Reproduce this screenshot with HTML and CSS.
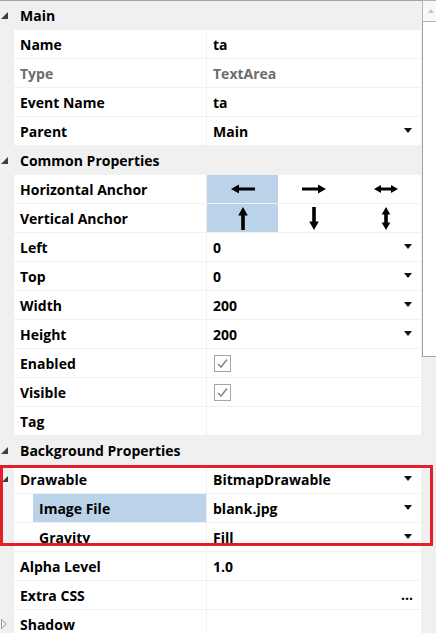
FILE: index.html
```html
<!DOCTYPE html>
<html>
<head>
<meta charset="utf-8">
<link rel="stylesheet" href="styles.css">
</head>
<body>
<div class="panel">
  <div class="grid">
    <div class="cat"><svg class="tri" viewBox="0 0 7 7"><path d="M7 0V7H0Z"/></svg><span class="cat-label">Main</span></div>
    <div class="row"><div class="gutter"></div><div class="name">Name</div><div class="val">ta</div></div>
    <div class="row dim"><div class="gutter"></div><div class="name">Type</div><div class="val">TextArea</div></div>
    <div class="row"><div class="gutter"></div><div class="name">Event Name</div><div class="val">ta</div></div>
    <div class="row"><div class="gutter"></div><div class="name">Parent</div><div class="val">Main<svg class="caret" viewBox="0 0 8 5"><path d="M0 0H8L4 5Z"/></svg></div></div>

    <div class="cat"><svg class="tri" viewBox="0 0 7 7"><path d="M7 0V7H0Z"/></svg><span class="cat-label">Common Properties</span></div>
    <div class="row"><div class="gutter"></div><div class="name">Horizontal Anchor</div>
      <div class="val anchors">
        <div class="seg sel"><svg class="harrow" viewBox="0 0 24 10"><path d="M0 5L8 0.5V3.4H24V6.6H8V9.5Z"/></svg></div>
        <div class="seg"><svg class="harrow" viewBox="0 0 24 10"><path d="M24 5L16 0.5V3.4H0V6.6H16V9.5Z"/></svg></div>
        <div class="seg"><svg class="harrow" viewBox="0 0 24 10"><path d="M0 5L7 1V3.5H17V1L24 5L17 9V6.5H7V9Z"/></svg></div>
      </div>
    </div>
    <div class="row"><div class="gutter"></div><div class="name">Vertical Anchor</div>
      <div class="val anchors">
        <div class="seg sel"><svg class="varrow" viewBox="0 0 10 23"><path d="M5 0L9.8 8.5H6.8V23H3.2V8.5H0.2Z"/></svg></div>
        <div class="seg"><svg class="varrow" viewBox="0 0 10 23"><path d="M5 23L9.8 14.5H6.8V0H3.2V14.5H0.2Z"/></svg></div>
        <div class="seg"><svg class="varrow" viewBox="0 0 10 23"><path d="M5 0L9.3 7.5H6.8V15.5H9.3L5 23L0.7 15.5H3.2V7.5H0.7Z"/></svg></div>
      </div>
    </div>
    <div class="row"><div class="gutter"></div><div class="name">Left</div><div class="val">0<svg class="caret" viewBox="0 0 8 5"><path d="M0 0H8L4 5Z"/></svg></div></div>
    <div class="row"><div class="gutter"></div><div class="name">Top</div><div class="val">0<svg class="caret" viewBox="0 0 8 5"><path d="M0 0H8L4 5Z"/></svg></div></div>
    <div class="row"><div class="gutter"></div><div class="name">Width</div><div class="val">200<svg class="caret" viewBox="0 0 8 5"><path d="M0 0H8L4 5Z"/></svg></div></div>
    <div class="row"><div class="gutter"></div><div class="name">Height</div><div class="val">200<svg class="caret" viewBox="0 0 8 5"><path d="M0 0H8L4 5Z"/></svg></div></div>
    <div class="row"><div class="gutter"></div><div class="name">Enabled</div><div class="val"><span class="chk"><svg viewBox="0 0 15 15"><path d="M3 8L6 11L12 3.5"/></svg></span></div></div>
    <div class="row"><div class="gutter"></div><div class="name">Visible</div><div class="val"><span class="chk"><svg viewBox="0 0 15 15"><path d="M3 8L6 11L12 3.5"/></svg></span></div></div>
    <div class="row"><div class="gutter"></div><div class="name">Tag</div><div class="val"></div></div>

    <div class="cat"><svg class="tri" viewBox="0 0 7 7"><path d="M7 0V7H0Z"/></svg><span class="cat-label">Background Properties</span></div>
    <div class="row"><div class="gutter"><svg class="tri-small" viewBox="0 0 6 6"><path d="M6 0V6H0Z"/></svg></div><div class="name">Drawable</div><div class="val">BitmapDrawable<svg class="caret" viewBox="0 0 8 5"><path d="M0 0H8L4 5Z"/></svg></div></div>
    <div class="row"><div class="gutter"></div><div class="name sub"><div class="sub-name sel">Image File</div></div><div class="val">blank.jpg<svg class="caret" viewBox="0 0 8 5"><path d="M0 0H8L4 5Z"/></svg></div></div>
    <div class="row"><div class="gutter"></div><div class="name sub"><div class="sub-name">Gravity</div></div><div class="val">Fill<svg class="caret" viewBox="0 0 8 5"><path d="M0 0H8L4 5Z"/></svg></div></div>
    <div class="row"><div class="gutter"></div><div class="name">Alpha Level</div><div class="val">1.0</div></div>
    <div class="row"><div class="gutter"></div><div class="name">Extra CSS</div><div class="val"><span></span><span class="dots">...</span></div></div>
    <div class="row"><div class="gutter"><svg class="tri-open" viewBox="0 0 6 10"><path d="M0.5 0.5L5.5 5L0.5 9.5Z"/></svg></div><div class="name">Shadow</div><div class="val"></div></div>
  </div>

  <div class="scroll">
    <div class="sb-btn"><svg class="sb-up" viewBox="0 0 6 4"><path d="M0 4L3 0L6 4Z"/></svg></div>
    <div class="sb-thumb"></div>
  </div>

  <div class="callout"></div>
</div>
</body>
</html>
```

FILE: styles.css
```css
html, body {
  margin: 0;
  padding: 0;
}

body {
  background: #f0f0f0;
  font-family: "Open Sans", "Noto Sans", sans-serif;
  font-weight: 700;
  font-size: 14px;
  color: #000;
  overflow: hidden;
  width: 436px;
  height: 633px;
}

.panel {
  position: relative;
  display: flex;
  height: 633px;
  overflow: hidden;
}

.grid {
  width: 422px;
  flex: none;
  border-top: 1px solid #a3a3a3;
  display: flex;
  flex-direction: column;
  gap: 1px;
}

.cat {
  width: 421px;
  height: 28px;
  flex: none;
  display: flex;
  align-items: center;
}

.tri {
  width: 7px;
  height: 7px;
  margin-left: 1px;
  fill: #3f3f3f;
}

.cat-label {
  margin-left: 12px;
}

.row {
  width: 421px;
  height: 28px;
  flex: none;
  display: grid;
  grid-template-columns: 14px 193px 214px;
}

.gutter {
  display: flex;
  align-items: center;
}

.tri-small {
  width: 6px;
  height: 6px;
  margin-left: 2px;
  fill: #3a3a3a;
}

.tri-open {
  width: 6px;
  height: 10px;
  margin-left: 1px;
  fill: none;
  stroke: #9c9c9c;
  stroke-width: 1;
}

.name {
  background: #fff;
  border-right: 1px solid #f0f0f0;
  padding-left: 6px;
  display: flex;
  align-items: center;
  white-space: nowrap;
}

.name.sub {
  padding-left: 19px;
  align-items: stretch;
}

.sub-name {
  flex: 1;
  padding-left: 6px;
  display: flex;
  align-items: center;
}

.sel {
  background: #bbd3e9;
}

.dim .name,
.dim .val {
  color: #6d6d6d;
}

.val {
  background: #fff;
  padding: 0 9px 0 6px;
  display: flex;
  align-items: center;
  justify-content: space-between;
  white-space: nowrap;
}

.caret {
  width: 8px;
  height: 5px;
  fill: #111;
  margin-top: -2px;
}

.dots {
  margin-right: -1px;
  line-height: 1;
}

.val.anchors {
  padding: 0;
  display: grid;
  align-items: stretch;
  grid-template-columns: 71px 72px 71px;
}

.seg {
  display: flex;
  align-items: center;
  justify-content: center;
}

.harrow {
  width: 24px;
  height: 10px;
  fill: #000;
}

.varrow {
  width: 10px;
  height: 23px;
  fill: #000;
}

.chk {
  width: 17px;
  height: 17px;
  box-sizing: border-box;
  border: 1px solid #a4a4a4;
  margin-left: 1px;
  margin-top: 1px;
  display: flex;
  background: #fff;
}

.chk svg {
  width: 15px;
  height: 15px;
  fill: none;
  stroke: #8a8a8a;
  stroke-width: 1.6;
}

.scroll {
  width: 14px;
  flex: none;
  display: flex;
  flex-direction: column;
}

.sb-btn {
  height: 22px;
  box-sizing: border-box;
  border: 1px solid #b3b3b3;
  border-right: none;
  background: #f8f8f8;
  display: flex;
  align-items: center;
  justify-content: flex-end;
  padding-right: 2px;
}

.sb-up {
  width: 6px;
  height: 4px;
  fill: #c4c4c4;
  margin-top: -1px;
}

.sb-thumb {
  height: 335px;
  box-sizing: border-box;
  background: #fff;
  border-left: 1px solid #a0a0a0;
  border-bottom: 1px solid #a0a0a0;
}

.callout {
  position: absolute;
  left: 0;
  top: 465px;
  width: 433px;
  height: 81px;
  box-sizing: border-box;
  border: 3px solid #e21f2b;
  pointer-events: none;
}
```
